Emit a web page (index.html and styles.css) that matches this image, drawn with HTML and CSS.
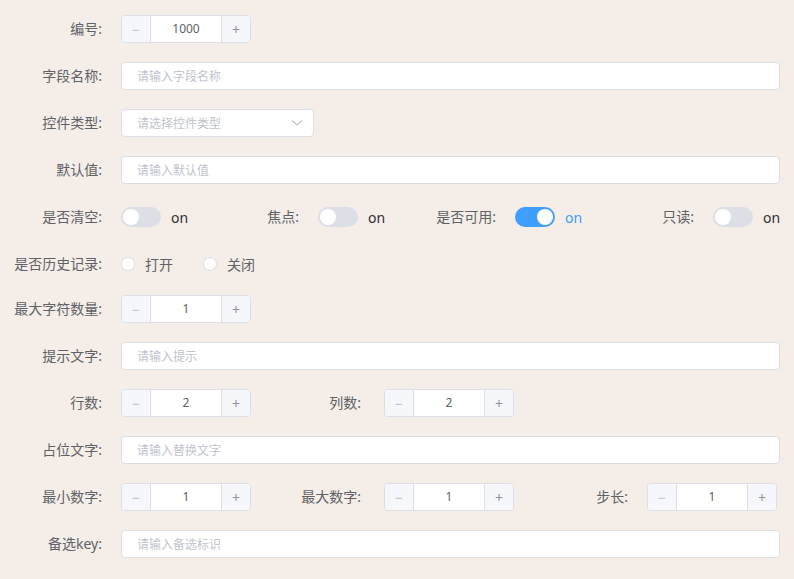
FILE: index.html
```html
<!DOCTYPE html>
<html lang="zh-CN">
<head>
<meta charset="utf-8">
<title>表单</title>
<link rel="stylesheet" href="styles.css">
</head>
<body>
<form class="form">
  <div class="item">
    <label class="label">编号:</label>
    <div class="content">
      <div class="num"><span class="btn">&minus;</span><span class="val">1000</span><span class="btn">+</span></div>
    </div>
  </div>

  <div class="item">
    <label class="label">字段名称:</label>
    <div class="content"><div class="input"><span class="ph">请输入字段名称</span></div></div>
  </div>

  <div class="item">
    <label class="label">控件类型:</label>
    <div class="content">
      <div class="input select"><span class="ph">请选择控件类型</span>
        <svg class="chev" width="12" height="8" viewBox="0 0 12 8"><path d="M1 1.5 L6 6 L11 1.5" fill="none" stroke="#c0c4cc" stroke-width="1.2"/></svg>
      </div>
    </div>
  </div>

  <div class="item">
    <label class="label">默认值:</label>
    <div class="content"><div class="input"><span class="ph">请输入默认值</span></div></div>
  </div>

  <div class="row4 item">
    <div class="cell">
      <label class="label">是否清空:</label>
      <div class="content"><span class="switch"><span class="knob"></span></span><span class="sw-text">on</span></div>
    </div>
    <div class="cell">
      <label class="label">焦点:</label>
      <div class="content"><span class="switch"><span class="knob"></span></span><span class="sw-text">on</span></div>
    </div>
    <div class="cell">
      <label class="label">是否可用:</label>
      <div class="content"><span class="switch on"><span class="knob"></span></span><span class="sw-text active">on</span></div>
    </div>
    <div class="cell">
      <label class="label">只读:</label>
      <div class="content"><span class="switch"><span class="knob"></span></span><span class="sw-text">on</span></div>
    </div>
  </div>

  <div class="item radio-row">
    <label class="label">是否历史记录:</label>
    <div class="content">
      <span class="radio"><span class="circle"></span><span class="r-text">打开</span></span>
      <span class="radio"><span class="circle"></span><span class="r-text">关闭</span></span>
    </div>
  </div>

  <div class="item">
    <label class="label">最大字符数量:</label>
    <div class="content">
      <div class="num"><span class="btn">&minus;</span><span class="val">1</span><span class="btn">+</span></div>
    </div>
  </div>

  <div class="item">
    <label class="label">提示文字:</label>
    <div class="content"><div class="input"><span class="ph">请输入提示</span></div></div>
  </div>

  <div class="row3 item">
    <div class="cell">
      <label class="label">行数:</label>
      <div class="content"><div class="num"><span class="btn">&minus;</span><span class="val">2</span><span class="btn">+</span></div></div>
    </div>
    <div class="cell">
      <label class="label mid">列数:</label>
      <div class="content"><div class="num"><span class="btn">&minus;</span><span class="val">2</span><span class="btn">+</span></div></div>
    </div>
  </div>

  <div class="item">
    <label class="label">占位文字:</label>
    <div class="content"><div class="input"><span class="ph">请输入替换文字</span></div></div>
  </div>

  <div class="row3 item">
    <div class="cell">
      <label class="label">最小数字:</label>
      <div class="content"><div class="num"><span class="btn">&minus;</span><span class="val">1</span><span class="btn">+</span></div></div>
    </div>
    <div class="cell">
      <label class="label mid">最大数字:</label>
      <div class="content"><div class="num"><span class="btn">&minus;</span><span class="val">1</span><span class="btn">+</span></div></div>
    </div>
    <div class="cell">
      <label class="label">步长:</label>
      <div class="content"><div class="num"><span class="btn">&minus;</span><span class="val">1</span><span class="btn">+</span></div></div>
    </div>
  </div>

  <div class="item">
    <label class="label">备选key:</label>
    <div class="content"><div class="input"><span class="ph">请输入备选标识</span></div></div>
  </div>
</form>
</body>
</html>
```

FILE: styles.css
```css
html, body {
  margin: 0;
  padding: 0;
  background: #f4ede8;
}
body {
  font-family: "Noto Sans", "Noto Sans CJK SC", sans-serif;
  color: #606266;
}
.form {
  padding: 15px 14px 0 0;
  width: 780px;
}
.item {
  display: flex;
  height: 28px;
  margin-bottom: 19px;
}
.radio-row {
  margin-bottom: 17px;
}
.label {
  width: 121px;
  flex: none;
  box-sizing: border-box;
  padding-right: 19px;
  text-align: right;
  font-size: 14px;
  line-height: 28px;
  color: #606266;
}
.label.mid {
  padding-right: 23px;
}
.content {
  flex: 1;
  display: flex;
  align-items: center;
  min-width: 0;
}
.row4 {
  display: grid;
  grid-template-columns: 197px 197px 198px 197px;
}
.row3 {
  display: grid;
  grid-template-columns: 263px 263px 263px;
}
.cell {
  display: flex;
  height: 28px;
}
.input {
  flex: 1;
  height: 28px;
  box-sizing: border-box;
  border: 1px solid #dcdfe6;
  border-radius: 4px;
  background: #fff;
  padding-left: 15px;
  display: flex;
  align-items: center;
  font-size: 12px;
}
.ph {
  color: #c0c4cc;
}
.select {
  flex: none;
  width: 193px;
  justify-content: space-between;
  padding-right: 10px;
}
.chev {
  display: block;
}
.num {
  width: 130px;
  height: 28px;
  box-sizing: border-box;
  border: 1px solid #dcdfe6;
  border-radius: 4px;
  background: #fff;
  display: flex;
  overflow: hidden;
  font-size: 12px;
}
.num .btn {
  width: 28px;
  flex: none;
  background: #f5f7fa;
  color: #909399;
  display: flex;
  align-items: center;
  justify-content: center;
  font-size: 14px;
}
.num .btn:first-child {
  border-right: 1px solid #dcdfe6;
  color: #c0c4cc;
}
.num .btn:last-child {
  border-left: 1px solid #dcdfe6;
}
.num .val {
  flex: 1;
  text-align: center;
  line-height: 26px;
  color: #606266;
}
.switch {
  width: 40px;
  height: 20px;
  border-radius: 10px;
  background: #dcdfe6;
  display: flex;
  align-items: center;
  padding: 0 2px;
  box-sizing: border-box;
  flex: none;
}
.switch .knob {
  width: 16px;
  height: 16px;
  border-radius: 50%;
  background: #fff;
}
.switch.on {
  background: #409eff;
  justify-content: flex-end;
}
.sw-text {
  margin-left: 10px;
  font-size: 14px;
  color: #303133;
}
.sw-text.active {
  color: #409eff;
}
.radio {
  display: inline-flex;
  align-items: center;
  margin-right: 30px;
}
.circle {
  width: 14px;
  height: 14px;
  box-sizing: border-box;
  border: 1px solid #dcdfe6;
  border-radius: 50%;
  background: #fff;
}
.r-text {
  margin-left: 10px;
  font-size: 14px;
  color: #606266;
}
```
